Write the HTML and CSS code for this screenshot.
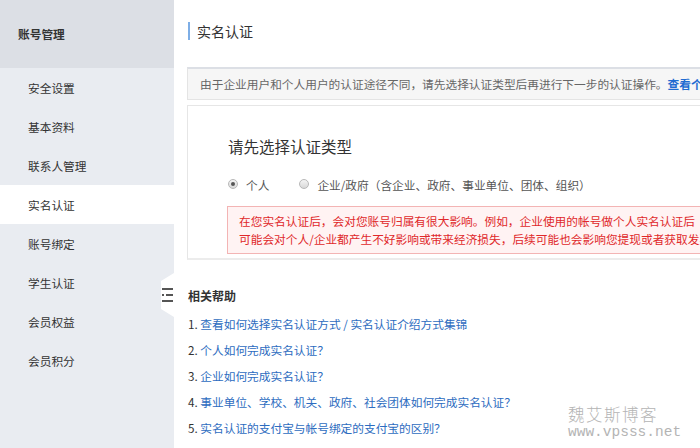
FILE: index.html
```html
<!DOCTYPE html>
<html lang="zh-CN">
<head>
<meta charset="utf-8">
<title>实名认证</title>
<link rel="stylesheet" href="styles.css">
</head>
<body>
<div class="page">
  <aside class="sidebar">
    <div class="side-head">账号管理</div>
    <ul class="side-menu">
      <li class="side-item">安全设置</li>
      <li class="side-item">基本资料</li>
      <li class="side-item">联系人管理</li>
      <li class="side-item active">实名认证</li>
      <li class="side-item">账号绑定</li>
      <li class="side-item">学生认证</li>
      <li class="side-item">会员权益</li>
      <li class="side-item">会员积分</li>
    </ul>
    <div class="collapse-tab">
      <svg class="collapse-icon" width="11" height="14" viewBox="0 0 11 14">
        <rect x="0" y="0" width="11" height="2" fill="#555"/>
        <rect x="0" y="6" width="2" height="2" fill="#555"/>
        <rect x="4" y="6" width="7" height="2" fill="#555"/>
        <rect x="0" y="12" width="11" height="2" fill="#555"/>
      </svg>
    </div>
  </aside>
  <main class="main">
    <div class="content">
      <h1 class="page-title">实名认证</h1>
      <div class="notice">由于企业用户和个人用户的认证途径不同，请先选择认证类型后再进行下一步的认证操作。<a class="notice-link">查看个人和企业认证的区别</a></div>
      <section class="card">
        <h2 class="card-title">请先选择认证类型</h2>
        <div class="radio-row">
          <label class="radio-opt"><span class="radio checked"></span>个人</label>
          <label class="radio-opt"><span class="radio"></span>企业/政府（含企业、政府、事业单位、团体、组织）</label>
        </div>
        <div class="warning">
          <div class="warn-line">在您实名认证后，会对您账号归属有很大影响。例如，企业使用的帐号做个人实名认证后</div>
          <div class="warn-line">可能会对个人/企业都产生不好影响或带来经济损失，后续可能也会影响您提现或者获取发票等服务。</div>
        </div>
      </section>
      <section class="help">
        <h3 class="help-title">相关帮助</h3>
        <ol class="help-list">
          <li class="help-item">1. <a class="help-link">查看如何选择实名认证方式 / 实名认证介绍方式集锦</a></li>
          <li class="help-item">2. <a class="help-link">个人如何完成实名认证？</a></li>
          <li class="help-item">3. <a class="help-link">企业如何完成实名认证？</a></li>
          <li class="help-item">4. <a class="help-link">事业单位、学校、机关、政府、社会团体如何完成实名认证？</a></li>
          <li class="help-item">5. <a class="help-link">实名认证的支付宝与帐号绑定的支付宝的区别？</a></li>
        </ol>
      </section>
    </div>
  </main>
  <div class="watermark">
    <div class="wm-cn">魏艾斯博客</div>
    <div class="wm-en">www.vpsss.net</div>
  </div>
</div>
</body>
</html>
```

FILE: styles.css
```css
* { box-sizing: border-box; }
html, body {
  margin: 0;
  padding: 0;
  width: 700px;
  height: 448px;
  overflow: hidden;
  background: #fff;
  font-family: "Noto Sans CJK SC", "Liberation Sans", sans-serif;
  font-size: 11.7px;
  color: #333;
}
.page {
  position: relative;
  display: flex;
  width: 700px;
  height: 448px;
}
.sidebar {
  position: relative;
  width: 174px;
  flex: 0 0 174px;
  height: 448px;
  background: #e9ecf1;
}
.side-head {
  height: 68px;
  line-height: 68px;
  padding-left: 18px;
  background: #dcdfe5;
  font-weight: bold;
  color: #333;
}
.side-menu {
  list-style: none;
  margin: 0;
  padding: 0;
}
.side-item {
  height: 39px;
  line-height: 39px;
  padding-left: 28px;
  color: #333;
}
.side-item.active {
  background: #fff;
}
.collapse-tab {
  position: absolute;
  left: 161px;
  top: 273px;
  width: 13px;
  height: 44px;
  background: #fff;
  clip-path: polygon(0 8px, 100% 0, 100% 100%, 0 36px);
  display: flex;
  align-items: center;
  justify-content: flex-end;
}
.collapse-icon {
  display: block;
  margin-right: 1px;
}
.main {
  flex: 1;
  min-width: 0;
  overflow: hidden;
}
.content {
  width: 620px;
  padding-left: 13px;
}
.page-title {
  margin: 22px 0 0 1px;
  height: 18px;
  line-height: 18px;
  font-size: 14px;
  font-weight: normal;
  color: #333;
  border-left: 2px solid #7eaee6;
  padding-left: 7px;
  display: flex;
  align-items: center;
}
.notice {
  margin-top: 27px;
  height: 33px;
  line-height: 30px;
  padding-left: 12px;
  background: #f6f6f6;
  border: 1px solid #e4e4e4;
  border-top: 2px solid #dcdfe5;
  color: #666;
  white-space: nowrap;
  overflow: hidden;
}
.notice-link {
  color: #1f6bd1;
  font-weight: bold;
}
.card {
  margin-top: 5px;
  height: 155px;
  border: 1px solid #e6e6e6;
  border-bottom: 2px solid #ececec;
  padding: 30px 0 0 40px;
}
.card-title {
  margin: 0;
  height: 20px;
  line-height: 20px;
  font-size: 15.5px;
  font-weight: normal;
  color: #333;
}
.radio-row {
  margin-top: 18px;
  height: 20px;
  display: flex;
  align-items: center;
  gap: 30px;
  color: #555;
}
.radio-opt {
  display: flex;
  align-items: center;
  gap: 8px;
}
.radio {
  width: 10px;
  height: 10px;
  border-radius: 50%;
  border: 1px solid #b8b8b8;
  background: linear-gradient(#f4f4f4, #d8d8d8);
  display: flex;
  align-items: center;
  justify-content: center;
}
.radio.checked::after {
  content: "";
  width: 4px;
  height: 4px;
  border-radius: 50%;
  background: #555;
}
.warning {
  margin-top: 12px;
  margin-left: -1px;
  width: 560px;
  border: 1px solid #f3b4b4;
  background: #fff3f3;
  padding: 5px 11px;
  color: #e0282a;
  line-height: 18px;
  overflow: hidden;
}
.warn-line {
  white-space: nowrap;
}
.help {
  margin-top: 26px;
  padding-left: 1px;
}
.help-title {
  margin: 0;
  height: 20px;
  line-height: 20px;
  font-size: 12px;
  font-weight: bold;
  color: #333;
}
.help-list {
  list-style: none;
  margin: 5px 0 0;
  padding: 0;
}
.help-item {
  height: 26px;
  line-height: 26px;
  color: #333;
  white-space: nowrap;
}
.help-link {
  color: #2d6cc0;
}
.watermark {
  position: absolute;
  left: 568px;
  top: 406px;
  color: #b4b4b4;
}
.wm-cn {
  font-family: "Noto Sans CJK SC", sans-serif;
  font-weight: 300;
  font-size: 16.5px;
  letter-spacing: 1.5px;
  line-height: 17px;
}
.wm-en {
  font-family: "Liberation Mono", monospace;
  font-size: 14.5px;
  line-height: 12px;
  margin-top: 3px;
}
```
